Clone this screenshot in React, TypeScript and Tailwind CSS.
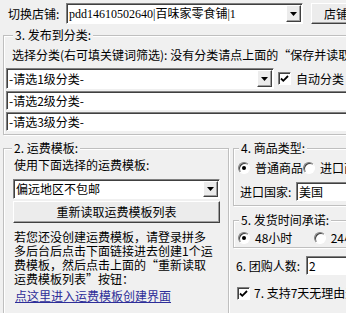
const sunken =
  "bg-white border border-t-[#808080] border-l-[#808080] border-r-white border-b-white shadow-[inset_1px_1px_0_#404040]";
const raised =
  "bg-[#ececec] border border-t-white border-l-white border-r-[#404040] border-b-[#404040] shadow-[inset_-1px_-1px_0_#a0a0a0]";
const etched =
  "border border-[#bfbfbf] shadow-[inset_1px_1px_0_#ffffff,1px_1px_0_#ffffff]";

function DropArrow() {
  return (
    <div className={`flex w-[15px] shrink-0 items-center justify-center ${raised}`}>
      <svg width="7" height="4" viewBox="0 0 7 4">
        <path d="M0 0h7L3.5 4z" fill="#000" />
      </svg>
    </div>
  );
}

function Combo({
  text,
  className,
  textClass = "",
}: {
  text: string;
  className: string;
  textClass?: string;
}) {
  return (
    <div className={`flex shrink-0 p-[1px] pl-[2px] ${sunken} ${className}`}>
      <div className={`flex flex-1 items-center whitespace-nowrap overflow-hidden ${textClass}`}>
        {text}
      </div>
      <DropArrow />
    </div>
  );
}

function Radio({ checked }: { checked?: boolean }) {
  return (
    <div className="flex h-[12px] w-[12px] shrink-0 items-center justify-center rounded-full border border-t-[#808080] border-l-[#808080] border-r-white border-b-white bg-white shadow-[inset_1px_1px_0_#404040]">
      {checked && <div className="h-[4px] w-[4px] rounded-full bg-black" />}
    </div>
  );
}

function Check() {
  return (
    <div className={`flex h-[13px] w-[13px] shrink-0 items-center justify-center ${sunken}`}>
      <svg width="9" height="9" viewBox="0 0 9 9">
        <path d="M1 4.5l2.3 2.3L8 2" fill="none" stroke="#000" strokeWidth="1.8" />
      </svg>
    </div>
  );
}

export default function App() {
  return (
    <div className="h-[313px] w-[346px] overflow-hidden bg-[#f0f0f0] pt-[3px] font-['Noto_Sans_CJK_SC',sans-serif] text-[12px] leading-[14px] text-black">
      {/* top: shop switch */}
      <div className="flex h-[21px] w-[420px] items-center">
        <span className="w-[66px] shrink-0 pl-[8px]">切换店铺:</span>
        <Combo
          text="pdd14610502640|百味家零食铺|1"
          className="h-[21px] w-[237px]"
          textClass="font-['Liberation_Serif','Noto_Sans_CJK_SC',serif] text-[12px]"
        />
        <button
          className={`ml-[8px] h-[21px] w-[70px] shrink-0 pl-[12px] text-left ${raised}`}
        >
          店铺授权
        </button>
      </div>

      {/* 3. category */}
      <fieldset className={`ml-[3px] mt-[4px] w-[360px] min-w-0 px-[2px] pb-[3px] ${etched}`}>
        <legend className="ml-[7px] bg-[#f0f0f0] px-[2px]">3. 发布到分类:</legend>
        <div className="mt-[6px] whitespace-nowrap pl-[6px]">
          选择分类(右可填关键词筛选): 没有分类请点上面的“保存并读取分类”按钮
        </div>
        <div className="mt-[6px] flex items-center">
          <Combo text="-请选1级分类-" className="h-[21px] w-[268px]" />
          <div className="ml-[4px]">
            <Check />
          </div>
          <span className="ml-[5px] whitespace-nowrap">自动分类</span>
        </div>
        <div className={`mt-[2px] flex h-[19px] w-[352px] items-center pl-[2px] ${sunken}`}>
          -请选2级分类-
        </div>
        <div className={`mt-[2px] flex h-[19px] w-[352px] items-center pl-[2px] ${sunken}`}>
          -请选3级分类-
        </div>
      </fieldset>

      <div className="mt-[6px] flex w-[400px] items-start">
        {/* 2. freight template */}
        <fieldset className={`ml-[3px] h-[220px] w-[226px] shrink-0 min-w-0 pl-[9px] pr-[7px] ${etched}`}>
          <legend className="ml-[-1px] bg-[#f0f0f0] px-[2px]">2. 运费模板:</legend>
          <div className="mt-[3px] pl-[1px]">使用下面选择的运费模板:</div>
          <Combo text="偏远地区不包邮" className="mt-[7px] h-[20px] w-[207px]" />
          <button className={`mt-[2px] h-[22px] w-[207px] ${raised}`}>
            重新读取运费模板列表
          </button>
          <p className="mt-[7px] pl-[1px] whitespace-nowrap">
            若您还没创建运费模板，请登录拼多
            <br />
            多后台后点击下面链接进去创建1个运
            <br />
            费模板，然后点击上面的“重新读取
            <br />
            运费模板列表”按钮：
          </p>
          <a href="#" className="mt-[3px] block pl-[2px] text-[#2e2e99] underline">
            点这里进入运费模板创建界面
          </a>
        </fieldset>

        <div className="ml-[4px] flex w-[140px] shrink-0 flex-col">
          {/* 4. goods type */}
          <fieldset className={`min-w-0 px-[4px] pb-[4px] ${etched}`}>
            <legend className="ml-[1px] bg-[#f0f0f0] px-[2px]">4. 商品类型:</legend>
            <div className="mt-[6px] flex items-center whitespace-nowrap">
              <div className="flex w-[92px] items-center">
                <Radio checked />
                <span className="ml-[5px]">普通商品</span>
              </div>
              <Radio />
              <span className="ml-[5px]">进口商品</span>
            </div>
            <div className="mt-[7px] flex items-center">
              <span className="w-[58px] shrink-0 pl-[2px]">进口国家:</span>
              <div className={`flex h-[19px] w-[60px] items-center pl-[2px] ${sunken}`}>美国</div>
            </div>
          </fieldset>

          {/* 5. shipping promise */}
          <fieldset className={`mt-[7px] min-w-0 px-[4px] pb-[2px] ${etched}`}>
            <legend className="ml-[1px] bg-[#f0f0f0] px-[2px]">5. 发货时间承诺:</legend>
            <div className="mt-[4px] flex items-center whitespace-nowrap">
              <div className="flex w-[92px] items-center">
                <Radio checked />
                <span className="ml-[5px]">48小时</span>
              </div>
              <Radio />
              <span className="ml-[5px]">24小时</span>
            </div>
          </fieldset>

          <div className="mt-[8px] flex items-center whitespace-nowrap pl-[3px]">
            <span className="w-[70px] shrink-0">6. 团购人数:</span>
            <div className={`flex h-[19px] w-[50px] items-center pl-[2px] ${sunken}`}>2</div>
          </div>

          <div className="mt-[11px] flex items-center whitespace-nowrap pl-[4px]">
            <Check />
            <span className="ml-[4px]">7. 支持7天无理由退换</span>
          </div>
        </div>
      </div>
    </div>
  );
}
